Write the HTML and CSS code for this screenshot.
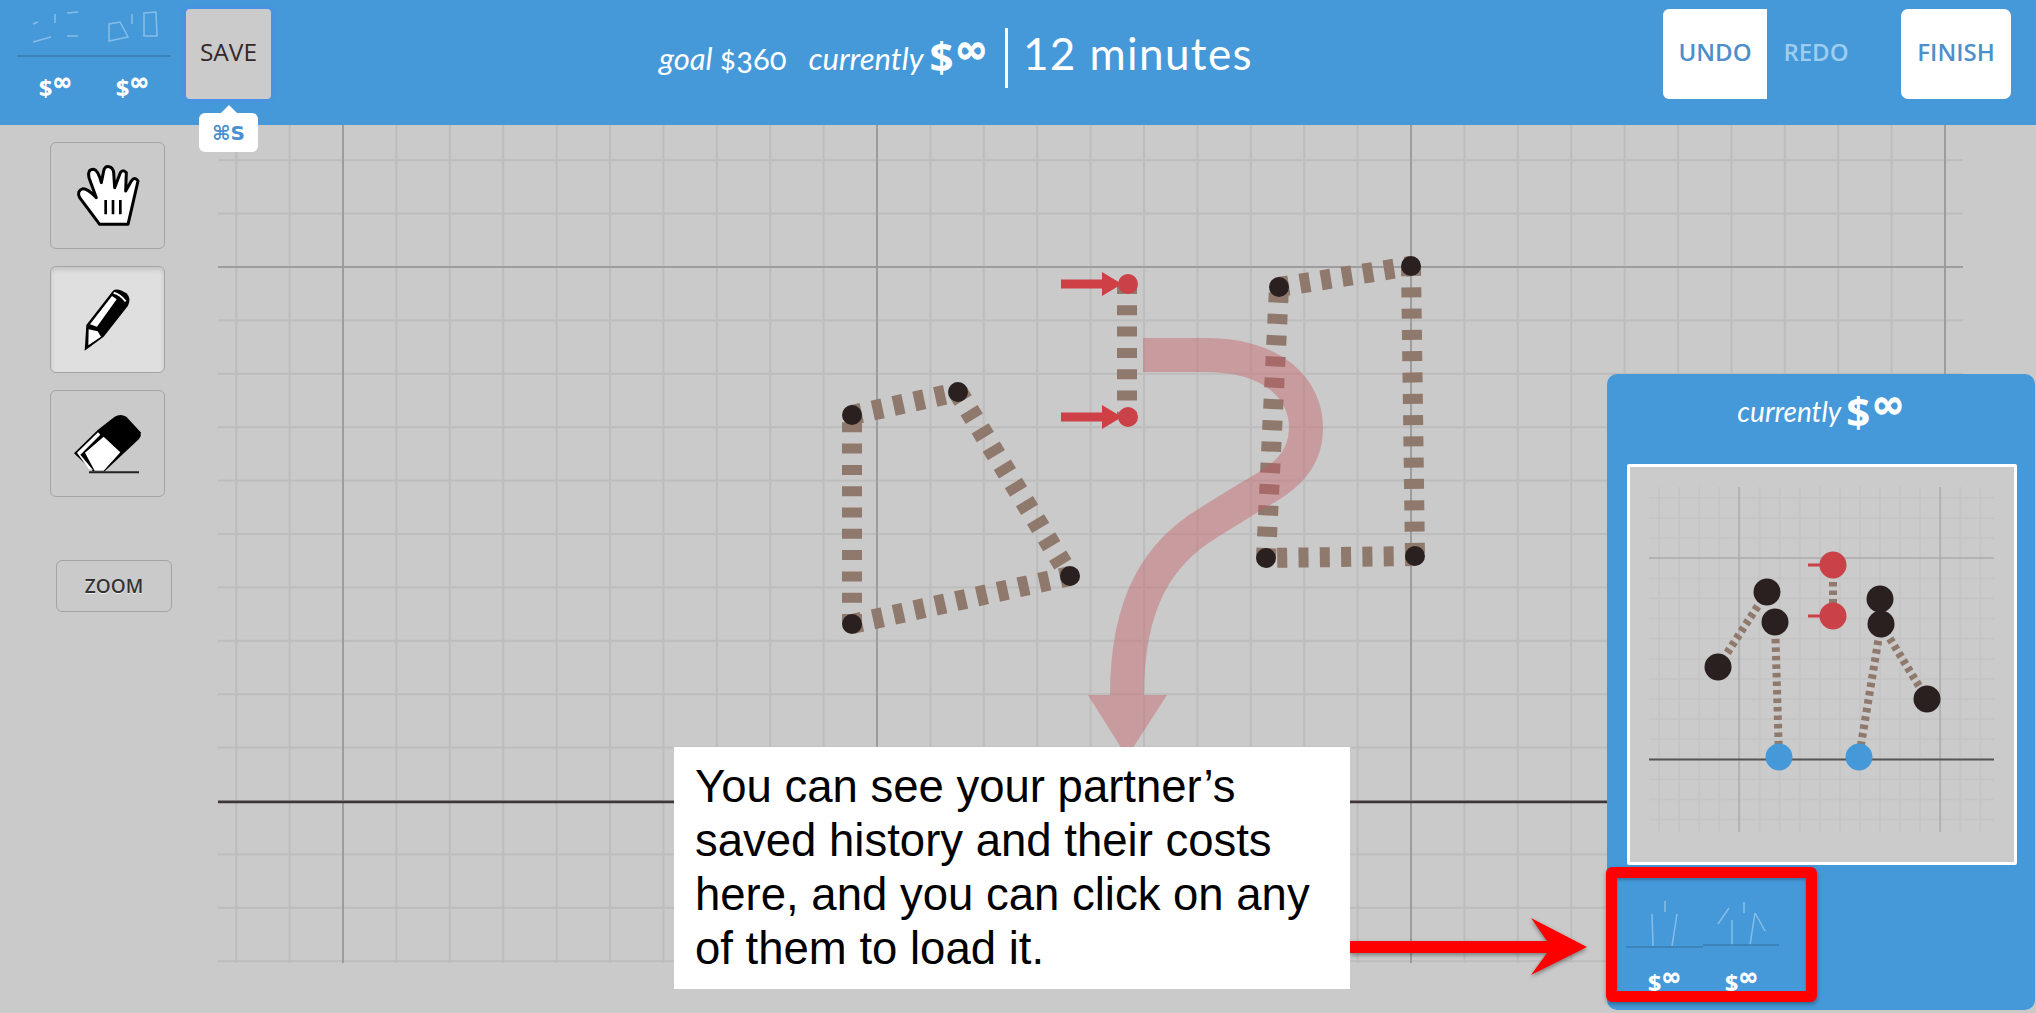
FILE: index.html
```html
<!DOCTYPE html>
<html>
  <head>
    <title>Truss game</title>
    <link rel="stylesheet" href="styles.css">
  </head>
  <body>
    <header class="topbar">
      <div class="history">
        <div class="thumb">
          <svg class="thumb-art" viewBox="17 0 77 60">
            <path class="faint" d="M33 24L38 22M55 14V23M67 13L78 12M67 36H78M33 42L51 37"/>
            <path class="thumb-axis" d="M17 56H94"/>
          </svg>
          <span class="cost"><span class="dollar">$</span><span class="inf">∞</span></span>
        </div>
        <div class="thumb">
          <svg class="thumb-art" viewBox="94 0 77 60">
            <path class="faint" d="M109 24L120 22L128 37L109 41ZM132 14V24M144 13L156 12L157 36H144Z"/>
            <path class="thumb-axis" d="M94 56H172"/>
          </svg>
          <span class="cost"><span class="dollar">$</span><span class="inf">∞</span></span>
        </div>
      </div>
      <button class="save">SAVE</button>
      <div class="status">
        <span class="note">goal</span>
        <span class="goal">$360</span>
        <span class="note note-now">currently</span>
        <span class="cost cost-big"><span class="dollar">$</span><span class="inf">∞</span></span>
        <span class="time">12 minutes</span>
      </div>
      <div class="actions">
        <button class="undo">UNDO</button>
        <button class="redo">REDO</button>
        <button class="finish">FINISH</button>
      </div>
      <div class="shortcut">⌘S</div>
    </header>

    <main class="workspace">
      <aside class="tools">
        <button class="tool">
          <svg class="tool-icon" viewBox="130 95 210 210">
            <path class="hand" d="M210 285L150 205Q140 185 160 178Q175 178 200 205L178 145Q172 120 192 120Q205 122 215 160L222 125Q225 110 238 112Q250 114 252 130L255 175L272 130Q280 118 290 130L288 185L305 155Q315 140 325 155L295 285Z"/>
            <path class="hand-lines" d="M228 212V255M250 212V255M272 212V255"/>
          </svg>
        </button>
        <button class="tool tool-on">
          <svg class="tool-icon" viewBox="130 465 210 210">
            <path d="M165 662L170 585L250 482Q264 472 290 490Q306 505 295 527L222 620Z"/>
            <path class="white" d="M181 583L247 498L261 508L202 590ZM177 598L204 604L214 620L176 646Z"/>
            <path class="pencil-band" d="M252 488Q272 493 288 514"/>
          </svg>
        </button>
        <button class="tool">
          <svg class="tool-icon" viewBox="130 835 210 210">
            <path d="M133 968L205 897L255 858Q272 848 290 858L333 905Q336 915 328 925L225 1022H190Z"/>
            <path class="white" d="M142 966L205 905L212 912L152 972L190 1018L178 1016ZM166 966L222 918L272 965L222 1020H195Z"/>
            <path class="eraser-line" d="M178 1025H328"/>
          </svg>
        </button>
        <button class="zoom">ZOOM</button>
      </aside>

      <div class="stage">
        <svg class="board" viewBox="218 125 1818 888">
          <defs>
            <pattern id="minor" patternUnits="userSpaceOnUse" x="342" y="266" width="53.4" height="53.4">
              <path class="grid-minor" d="M1 0V53.4M0 1H53.4"/>
            </pattern>
            <pattern id="major" patternUnits="userSpaceOnUse" x="342" y="266" width="534" height="534">
              <path class="grid-major" d="M1 0V534M0 1H534"/>
            </pattern>
          </defs>
          <rect x="218" y="125" width="1745" height="838" fill="url(#minor)"/>
          <rect x="218" y="125" width="1745" height="838" fill="url(#major)"/>
          <path class="grid-axis" d="M218 802H1963"/>

          <path class="beam" d="M852 624V415M852 415L958 392M958 392L1070 576M1070 576L852 624"/>
          <path class="beam" d="M1266 558L1279 287M1279 287L1411 266M1411 266L1415 556M1415 556L1266 558"/>
          <path class="beam" d="M1127 284V417"/>

          <path class="hint-curve" d="M1143 355H1205C1275 355 1306 390 1306 428C1306 465 1280 480 1250 497L1208 523C1160 552 1127 600 1127 695"/>
          <path class="hint-head" d="M1088 695H1167L1127 757Z"/>

          <path class="red-arrow" d="M1061 279.500H1102V272L1122 284L1102 296V288.500H1061Z"/>
          <path class="red-arrow" d="M1061 412.500H1102V405L1122 417L1102 429V421.500H1061Z"/>
          <circle class="red-dot" cx="1128" cy="284" r="10"/>
          <circle class="red-dot" cx="1128" cy="417" r="10"/>

          <circle class="joint" cx="852" cy="415" r="10"/>
          <circle class="joint" cx="958" cy="392" r="10"/>
          <circle class="joint" cx="1070" cy="576" r="10"/>
          <circle class="joint" cx="852" cy="624" r="10"/>
          <circle class="joint" cx="1279" cy="287" r="10"/>
          <circle class="joint" cx="1411" cy="266" r="10"/>
          <circle class="joint" cx="1266" cy="558" r="10"/>
          <circle class="joint" cx="1415" cy="556" r="10"/>

          <path class="callout-arrow" d="M1350 941H1547L1531 918L1587 947L1531 975L1547 953H1350Z"/>
        </svg>

        <div class="callout">You can see your partner’s saved history and their costs here, and you can click on any of them to load it.</div>

        <section class="partner">
          <div class="partner-title">
            <span class="note">currently</span>
            <span class="cost cost-big"><span class="dollar">$</span><span class="inf">∞</span></span>
          </div>
          <div class="partner-view">
            <svg class="partner-art" viewBox="1630 467 384 395">
              <defs>
                <pattern id="small-minor" patternUnits="userSpaceOnUse" x="1658" y="497" width="20.1" height="20.1">
                  <path class="small-grid" d="M1 0V20.1M0 1H20.1"/>
                </pattern>
              </defs>
              <rect x="1649" y="487" width="345" height="345" fill="url(#small-minor)"/>
              <path class="small-major" d="M1739 487V832M1940 487V832M1649 558H1994"/>
              <path class="small-axis" d="M1649 759.500H1994"/>
              <path class="small-beam" d="M1718 667L1767 592M1775 622L1779 757M1833 565V616M1881 624L1859 757M1881 624L1927 699"/>
              <path class="small-tick" d="M1808 565H1825M1808 616H1825"/>
              <circle class="joint" cx="1718" cy="667" r="13.500"/>
              <circle class="joint" cx="1767" cy="592" r="13.500"/>
              <circle class="joint" cx="1775" cy="622" r="13.500"/>
              <circle class="joint" cx="1880" cy="599" r="13.500"/>
              <circle class="joint" cx="1881" cy="624" r="13.500"/>
              <circle class="joint" cx="1927" cy="699" r="13.500"/>
              <circle class="red-dot" cx="1833" cy="565" r="13.500"/>
              <circle class="red-dot" cx="1833" cy="616" r="13.500"/>
              <circle class="base" cx="1779" cy="757" r="13.500"/>
              <circle class="base" cx="1859" cy="757" r="13.500"/>
            </svg>
          </div>
          <div class="partner-history">
            <div class="thumb thumb-small">
              <svg class="thumb-art" viewBox="1626 890 77 62">
                <path class="faint" d="M1665 901V912M1652 914L1653 946M1677 914L1672 946"/>
                <path class="thumb-axis" d="M1626 947H1703"/>
              </svg>
              <span class="cost"><span class="dollar">$</span><span class="inf">∞</span></span>
            </div>
            <div class="thumb thumb-small">
              <svg class="thumb-art" viewBox="1703 890 77 62">
                <path class="faint" d="M1729 908L1718 924M1732 920V945M1744 902V913M1755 913L1750 945M1755 913L1765 931"/>
                <path class="thumb-axis" d="M1703 945H1779"/>
              </svg>
              <span class="cost"><span class="dollar">$</span><span class="inf">∞</span></span>
            </div>
          </div>
          <div class="highlight"></div>
        </section>
      </div>
    </main>
  </body>
</html>
```
FILE: styles.css
```css
* { box-sizing: border-box; }
body { margin: 0; height: 1013px; overflow: hidden; display: flex; flex-direction: column; background: #cacaca; font-family: Lato, "Open Sans", sans-serif; }
button { font-family: "Open Sans", Lato, sans-serif; border: none; padding: 0; }

/* top bar */
.topbar { position: relative; flex: none; height: 125px; display: flex; align-items: flex-start; padding: 9px 25px 0 17px; background: #4599d9; color: #fff; }
.history { display: flex; width: 169px; margin-top: -9px; }
.thumb { width: 77px; display: flex; flex-direction: column; align-items: center; }
.thumb-art { display: block; width: 77px; height: 60px; }
.faint { fill: none; stroke: #86bde8; stroke-width: 1.5; }
.thumb-axis { fill: none; stroke: #3a7cb0; stroke-width: 1.5; }

.cost { font-weight: 700; white-space: nowrap; display: inline-flex; align-items: flex-start; font-size: 24px; line-height: 32px; color: #fff; }
.dollar { font-family: "Open Sans", sans-serif; font-weight: 700; }
.inf { font-family: "DejaVu Sans", sans-serif; font-weight: 700; font-size: 1em; line-height: 0.9em; -webkit-text-stroke: 0.6px #fff; }
.thumb .cost { margin-top: 12px; }

.save { width: 85px; height: 90px; border-radius: 4px; background: #cbcbcb; color: #33292a; font-size: 24.500px; padding-bottom: 6px; box-shadow: 0 0 4px 2px #4d8fe8; }
.status { display: flex; align-items: baseline; margin-left: 388px; height: 62px; padding-top: 22px; }
.note { font-style: italic; font-size: 31px; }
.goal { font-size: 31px; margin-left: 7px; margin-right: 22px; font-feature-settings: "onum"; }
.note-now { margin-right: 6px; }
.cost-big { font-size: 42px; line-height: 50px; align-self: flex-start; margin-top: 0; }
.cost-big .inf { margin-top: 0; margin-left: 1px; font-size: 40px; -webkit-text-stroke: 1px #fff; }
.time { font-size: 44px; line-height: 50px; letter-spacing: 1.400px; margin-left: 17px; padding-left: 15px; border-left: 3px solid #fff; height: 60px; margin-top: -3px; }

.actions { display: flex; margin-left: auto; }
.undo, .redo, .finish { height: 90px; font-size: 24px; font-weight: 600; padding-bottom: 5px; }
.undo { width: 104px; background: #fff; color: #4e8fcb; border-radius: 6px 0 0 6px; }
.redo { width: 98px; background: #4599d9; color: #9dcdf0; }
.finish { width: 110px; margin-left: 36px; background: #fff; color: #4e8fcb; border-radius: 7px; }

.shortcut { position: absolute; left: 199px; top: 113px; width: 59px; height: 39px; display: flex; align-items: center; justify-content: center; z-index: 2; background: #fff; border-radius: 6px; color: #4a90d0; font: 700 20px "DejaVu Sans", sans-serif; }
.shortcut::before { content: ""; position: absolute; left: 22px; top: -8px; border: 8px solid transparent; border-top: none; border-bottom-color: #fff; }

/* tools */
.workspace { flex: 1; display: flex; min-height: 0; }
.tools { flex: none; width: 218px; padding: 17px 0 0 50px; display: flex; flex-direction: column; align-items: flex-start; gap: 17px; }
.tool { width: 115px; height: 107px; display: flex; align-items: center; justify-content: center; background: #cacaca; border: 1px solid #a5a3a3; border-radius: 6px; }
.tool-on { background: #dfdfdf; box-shadow: inset 0 3px 4px rgba(0, 0, 0, 0.12); }
.tool-icon { display: block; width: 70px; height: 70px; }
.hand { fill: #fff; stroke: #000; stroke-width: 9; stroke-linejoin: round; }
.hand-lines { fill: none; stroke: #000; stroke-width: 8; }
.white { fill: #fff; }
.pencil-band { fill: none; stroke: #fff; stroke-width: 6; }
.eraser-line { fill: none; stroke: #222; stroke-width: 6; }
.zoom { width: 116px; height: 52px; margin: 46px 0 0 6px; background: #cacaca; border: 1px solid #a5a3a3; border-radius: 6px; color: #333; font-size: 19px; font-weight: 600; text-shadow: 0 1px 0 #eee; }

/* board */
.stage { position: relative; flex: 1; }
.board { display: block; width: 1818px; height: 888px; }
.grid-minor { fill: none; stroke: rgba(0, 0, 0, 0.065); stroke-width: 2; }
.grid-major { fill: none; stroke: rgba(0, 0, 0, 0.17); stroke-width: 2; }
.grid-axis { fill: none; stroke: #3f3539; stroke-width: 2.500; }
.beam { fill: none; stroke: #8f786c; stroke-width: 20; stroke-dasharray: 10 11.3; }
.joint { fill: #2a2020; }
.red-dot { fill: #cb4148; }
.base { fill: #4599d9; }
.red-arrow { fill: #cf3f46; }
.hint-curve { fill: none; stroke: rgba(198, 90, 100, 0.42); stroke-width: 34; }
.hint-head { fill: rgba(198, 90, 100, 0.42); }
.callout-arrow { fill: #f00; filter: drop-shadow(0 2px 2px rgba(0, 0, 0, 0.4)); }

.callout { position: absolute; left: 456px; top: 622px; width: 676px; height: 242px; padding: 13px 21px; background: #fff; color: #000; font: 45.500px/54px "Liberation Sans", Arial, sans-serif; }

/* partner panel */
.partner { position: absolute; left: 1389px; top: 249px; width: 428px; height: 636px; background: #4599d9; border-radius: 10px; color: #fff; }
.partner-title { height: 90px; display: flex; justify-content: center; align-items: baseline; gap: 5px; padding-top: 20px; }
.partner-title .note { font-size: 28px; }
.partner-title .cost-big { margin-top: -8px; }
.partner-view { width: 390px; height: 401px; margin-left: 20px; border: 3px solid #fff; border-radius: 2px; background: #cbcbcb; }
.partner-art { display: block; width: 384px; height: 395px; }
.small-grid { fill: none; stroke: rgba(0, 0, 0, 0.035); stroke-width: 1.500; }
.small-major { fill: none; stroke: rgba(0, 0, 0, 0.13); stroke-width: 1.500; }
.small-axis { fill: none; stroke: #555; stroke-width: 2; }
.small-beam { fill: none; stroke: #8f786c; stroke-width: 8; stroke-dasharray: 4.500 4; }
.small-tick { fill: none; stroke: #cb4148; stroke-width: 3; }
.partner-history { display: flex; margin: 25px 0 0 19px; }
.thumb-small .thumb-art { height: 62px; }
.thumb-small .cost { margin-top: 15px; font-size: 24px; }
.highlight { position: absolute; left: -1px; top: 493px; width: 211px; height: 135px; border: 11px solid #f00; border-radius: 6px; box-shadow: 0 2px 4px rgba(0, 0, 0, 0.35), inset 0 2px 3px rgba(0, 0, 0, 0.25); }
```
